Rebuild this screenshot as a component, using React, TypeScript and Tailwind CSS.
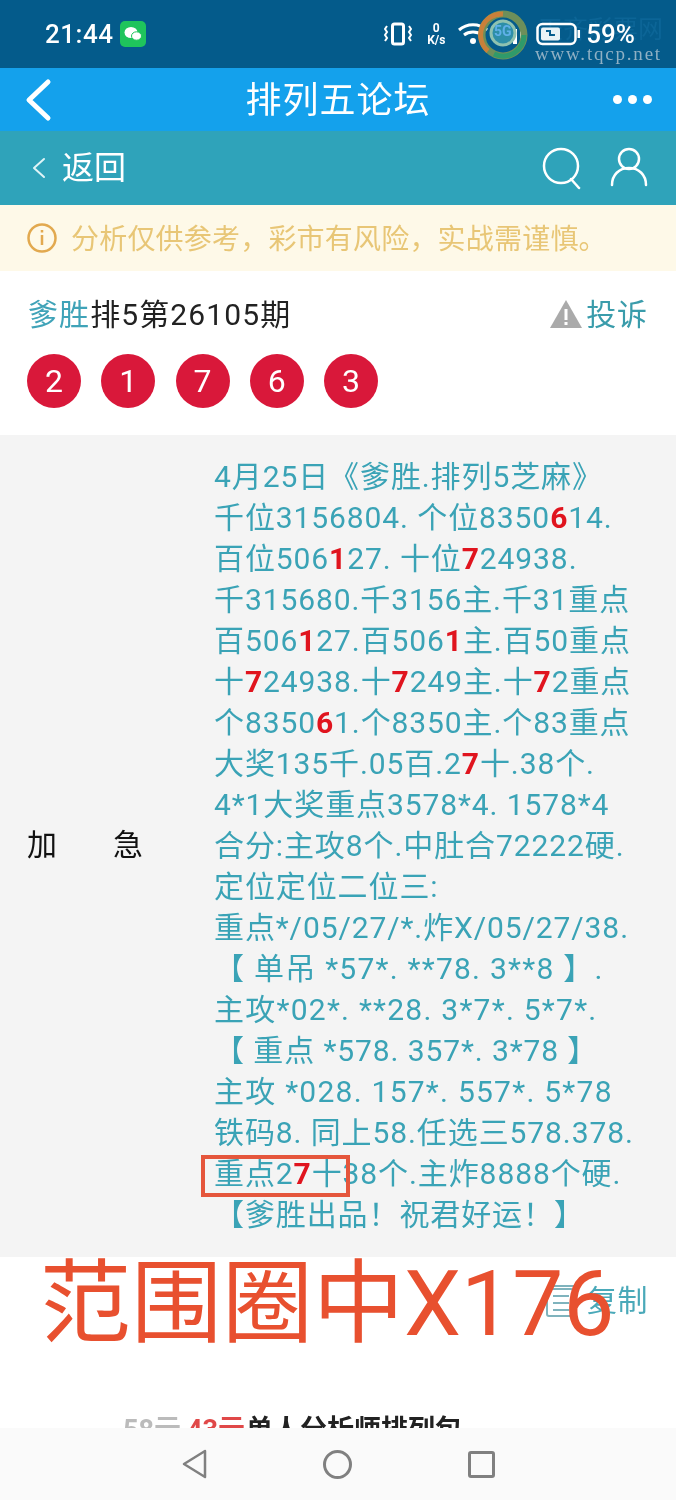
import { ReactNode } from 'react';

const R = ({ children }: { children: ReactNode }) => (
  <b className="font-bold text-[#e0141e]">{children}</b>
);

const Wide = ({ children }: { children: ReactNode }) => (
  <span className="tracking-[1.250px]">{children}</span>
);

const lines: ReactNode[] = [
  <>4月25日《爹胜.排列5芝麻》</>,
  <>千位3156804. 个位8350<R>6</R>14.</>,
  <>百位506<R>1</R>27. 十位<R>7</R>24938.</>,
  <>千315680.千3156主.千31重点</>,
  <>百506<R>1</R>27.百506<R>1</R>主.百50重点</>,
  <>十<R>7</R>24938.十<R>7</R>249主.十<R>7</R>2重点</>,
  <>个8350<R>6</R>1.个8350主.个83重点</>,
  <>大奖135千.05百.2<R>7</R>十.38个.</>,
  <>4*1大奖重点3578*4. 1578*4</>,
  <>合分:主攻8个.中肚合72222硬.</>,
  <>定位定位二位三:</>,
  <>重点*/05/27/*.炸X/05/27/38.</>,
  <Wide>【 单吊 *57*. **78. 3**8 】.</Wide>,
  <Wide>主攻*02*. **28. 3*7*. 5*7*.</Wide>,
  <>【 重点 *578. 357*. 3*78 】</>,
  <Wide>主攻 *028. 157*. 557*. 5*78</Wide>,
  <>铁码8. 同上58.任选三578.378.</>,
  <>重点2<R>7</R>十38个.主炸8888个硬.</>,
  <>【爹胜出品！祝君好运！】</>,
];

const balls = ['2', '1', '7', '6', '3'];

export default function App() {
  return (
    <div className="relative w-[676px] h-[1500px] overflow-hidden bg-white font-['Roboto','Noto_Sans_CJK_SC',sans-serif]">
      {/* status bar */}
      <div className="flex h-[68px] items-center bg-[#045b8b] pl-[45px] pr-[41px] text-white">
        <span className="text-[26px] font-medium tracking-[0.5px]">21:44</span>
        <div className="ml-[7px] flex h-[26px] w-[26px] items-center justify-center rounded-[5px] bg-[#1fc45c]">
          <svg width="20" height="16" viewBox="0 0 20 16" fill="white">
            <ellipse cx="8" cy="6.5" rx="6.5" ry="5.5" />
            <ellipse cx="13.5" cy="10" rx="5" ry="4.2" stroke="#1fc45c" strokeWidth="1" />
          </svg>
        </div>
        <div className="ml-auto flex items-center">
          <svg width="28" height="26" viewBox="0 0 28 26" fill="none" stroke="white" strokeWidth="2">
            <rect x="8.500" y="3" width="11" height="20" rx="2" strokeWidth="3" />
            <path d="M3 5 1 8l2 3-2 3 2 3-2 3M25 5l2 3-2 3 2 3-2 3 2 3" />
          </svg>
          <div className="ml-[11px] flex w-[26px] flex-col items-center text-[12px] font-bold leading-[12px]">
            <span>0</span>
            <span>K/s</span>
          </div>
          <svg width="30" height="24" viewBox="0 0 30 24" fill="none" stroke="white" strokeWidth="3" className="ml-[9px]">
            <path d="M1 8c8-7 20-7 28 0M6 13c5-4 13-4 18 0" />
            <circle cx="15" cy="19" r="3" fill="white" stroke="none" />
          </svg>
          <svg width="30" height="24" viewBox="0 0 30 24" fill="white" className="ml-[9px]">
            <rect x="2" y="16" width="4" height="6" />
            <rect x="9" y="12" width="4" height="10" />
            <rect x="16" y="7" width="4" height="15" />
            <rect x="23" y="2" width="4" height="20" />
          </svg>
          <svg width="44" height="26" viewBox="0 0 44 26" fill="none" className="ml-[9px]">
            <rect x="1.500" y="3" width="38" height="20" rx="5" stroke="white" strokeWidth="2.500" />
            <rect x="5" y="6.500" width="19" height="13" rx="2" fill="#e8f2f6" />
            <path d="M10 10h4v4h5" stroke="#045b8b" strokeWidth="2" />
            <rect x="41.500" y="9" width="2.500" height="8" fill="white" />
          </svg>
          <span className="ml-[6px] text-[26px] font-medium">59%</span>
        </div>
      </div>

      {/* title bar */}
      <div className="relative flex h-[63px] items-center justify-center bg-[#14a1ec] pt-[3px] text-white">
        <svg width="30" height="44" viewBox="0 0 30 44" fill="none" stroke="white" strokeWidth="5" strokeLinecap="round" strokeLinejoin="round" className="absolute left-[23px] top-[10px]">
          <path d="M25 4 6 22l19 18" />
        </svg>
        <span className="text-[36px] leading-none tracking-[1px]">排列五论坛</span>
        <div className="absolute right-[24px] top-[27px] flex gap-[6px]">
          <span className="h-[9px] w-[9px] rounded-full bg-white" />
          <span className="h-[9px] w-[9px] rounded-full bg-white" />
          <span className="h-[9px] w-[9px] rounded-full bg-white" />
        </div>
      </div>

      {/* sub bar */}
      <div className="flex h-[74px] items-center bg-[#2fa3ba] pl-[32px] pr-[28px] text-white">
        <svg width="14" height="22" viewBox="0 0 14 22" fill="none" stroke="#dff4f7" strokeWidth="2" strokeLinecap="round" strokeLinejoin="round">
          <path d="M12 2 2 11l10 9" />
        </svg>
        <span className="ml-[16px] text-[32px] leading-none">返回</span>
        <svg width="40" height="44" viewBox="0 0 40 44" fill="none" stroke="white" strokeWidth="2.500" strokeLinecap="round" className="ml-auto">
          <circle cx="19" cy="20" r="17" />
          <path d="m29 33 8 9" />
        </svg>
        <svg width="38" height="42" viewBox="0 0 38 42" fill="none" stroke="white" strokeWidth="2.500" strokeLinecap="round" className="ml-[28px]">
          <circle cx="19" cy="12" r="10" />
          <path d="M2 38c0-10 7-17 17-17s17 7 17 17" />
        </svg>
      </div>

      {/* notice */}
      <div className="flex h-[66px] items-center bg-[#fef9e8] pl-[27px] text-[28px] tracking-[0.2px] text-[#e8c676]">
        <svg width="30" height="32" viewBox="0 0 30 32" fill="none" stroke="#e2a94f" strokeWidth="2.500">
          <circle cx="15" cy="16" r="13.500" />
          <path d="M15 13v10M15 8v2.500" />
        </svg>
        <span className="ml-[14px] mt-[4px] whitespace-nowrap">分析仅供参考，彩市有风险，实战需谨慎。</span>
      </div>

      {/* post header */}
      <div className="h-[164px] pl-[27px] pr-[28px] pt-[22px]">
        <div className="flex h-[42px] items-center justify-between text-[30px] tracking-[0.9px]">
          <div className="ml-[1px] tracking-[1.100px] text-[#222]">
            <span className="text-[#3fa3b8]">爹胜</span>排5第26105期
          </div>
          <div className="flex items-center text-[#3a9cab]">
            <svg width="34" height="30" viewBox="0 0 34 30" className="mr-[3px]">
              <path d="M17 1 33 29H1Z" fill="#aaa" />
              <path d="M17 10v11M17 23v3" stroke="white" strokeWidth="3" />
            </svg>
            投诉
          </div>
        </div>
        <div className="mt-[19px] flex gap-[20.250px]">
          {balls.map((n, i) => (
            <div key={i} className="flex h-[54px] w-[54px] items-center justify-center rounded-full bg-[#d9183a] text-[32px] text-white">
              {n}
            </div>
          ))}
        </div>
      </div>

      {/* post body */}
      <div className="flex h-[822px] bg-[#f4f4f4] pl-[27px] pt-[21px]">
        <div className="flex w-[187px] items-center pb-[25px] text-[30px] text-[#111]">
          <span>加</span>
          <span className="ml-[56px]">急</span>
        </div>
        <div className="text-[30px] leading-[41px] tracking-[0.9px] text-[#3aa3b6]">
          {lines.map((l, i) => (
            <div key={i} className="whitespace-nowrap">
              {l}
            </div>
          ))}
        </div>
      </div>

      {/* copy */}
      <div className="flex justify-end pr-[28px] pt-[21px] text-[30px] tracking-[0.5px] text-[#4aa9b9]">
        <svg width="34" height="34" viewBox="0 0 34 34" fill="none" stroke="#7fb3bd" strokeWidth="2" className="mr-[8px] mt-[6px]">
          <rect x="2" y="5" width="26" height="27" rx="2" />
          <path d="M8 2h22M8 12h16M8 19h16M8 26h16" />
        </svg>
        复制
      </div>

      {/* next post title, clipped by the nav */}
      <div className="absolute left-[123px] top-[1413px] flex whitespace-nowrap text-[27px] font-bold leading-[34px] text-[#222]">
        <span className="text-[#bbb]">58元</span>
        <span className="ml-[6px] text-[#e04848]">43元</span>
        <span className="ml-[1px]">单人分析师排列包</span>
      </div>

      {/* android nav */}
      <div className="absolute bottom-0 left-0 flex h-[72px] w-full items-center justify-center gap-[116px] bg-[#fafafa]">
        <svg width="25" height="30" viewBox="0 0 25 30" fill="none" stroke="#808080" strokeWidth="2.500" strokeLinejoin="round">
          <path d="M23 2 2 15l21 13Z" />
        </svg>
        <span className="h-[29px] w-[29px] rounded-full border-[3px] border-[#808080]" />
        <span className="h-[27px] w-[27px] rounded-[3px] border-[3px] border-[#808080]" />
      </div>

      {/* overlays added on top of the screenshot */}
      <div className="absolute left-[201px] top-[1155px] h-[42px] w-[149px] border-[4px] border-[#e5563c]" />
      <div className="absolute left-[40px] top-[1256px] whitespace-nowrap text-[91px] leading-[96px] text-[#e8502f]">
        范围圈中X176
      </div>

      {/* site watermark over the status bar */}
      <svg width="50" height="52" viewBox="0 0 50 52" fill="none" className="absolute left-[478px] top-[9px]">
        <circle cx="25" cy="26" r="21" stroke="#6d8f5a" strokeWidth="7" />
        <path d="M10 42A21 21 0 0 1 25 5" stroke="#c9803a" strokeWidth="5" />
        <path d="M46 26a21 21 0 0 1-30 19" stroke="#2f9a6a" strokeWidth="5" />
        <circle cx="25" cy="24" r="12" fill="#2d8fa8" stroke="#8ec2b0" strokeWidth="3" />
      </svg>
      <div className="absolute left-[494px] top-[24px] text-[14px] font-bold leading-none text-[#5fb0e8]">5G</div>
      <div className="absolute left-[538px] top-[17px] whitespace-nowrap text-[25px] leading-none text-[#08101a] mix-blend-screen">
        天齐彩票网
      </div>
      <div className="absolute left-[535px] top-[44px] whitespace-nowrap font-['Liberation_Serif',serif] text-[19px] leading-none tracking-[1.800px] text-[#8fb0c4]">
        www.tqcp.net
      </div>
    </div>
  );
}
